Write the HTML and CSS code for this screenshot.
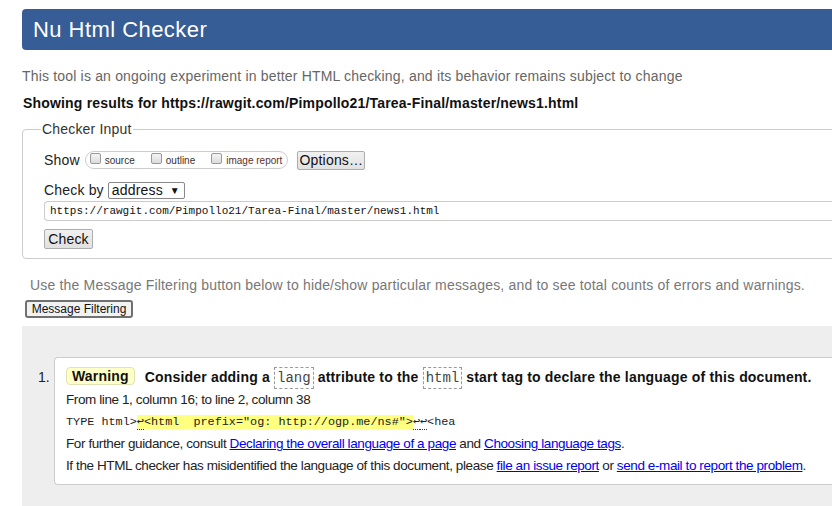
FILE: index.html
```html
<!DOCTYPE html>
<html lang="en">
<head>
<meta charset="utf-8">
<title>Nu Html Checker</title>
<link rel="stylesheet" href="styles.css">
</head>
<body>
<div class="page">
  <h1 class="banner">Nu Html Checker</h1>
  <p class="intro">This tool is an ongoing experiment in better HTML checking, and its behavior remains subject to change</p>
  <p class="showing">Showing results for https://rawgit.com/Pimpollo21/Tarea-Final/master/news1.html</p>
  <fieldset class="input">
    <legend>Checker Input</legend>
    <div class="row show-row">
      <span class="label">Show</span>
      <span class="opts">
        <span class="opt"><span class="cb"></span>source</span>
        <span class="opt"><span class="cb"></span>outline</span>
        <span class="opt img"><span class="cb"></span>image report</span>
      </span>
      <span class="btn options">Options…</span>
    </div>
    <div class="row by-row">
      <span class="label">Check by</span>
      <span class="select">address<span class="arrow">▼</span></span>
    </div>
    <div class="url">https://rawgit.com/Pimpollo21/Tarea-Final/master/news1.html</div>
    <span class="btn check">Check</span>
  </fieldset>
  <p class="filter-note">Use the Message Filtering button below to hide/show particular messages, and to see total counts of errors and warnings.</p>
  <span class="filter-btn">Message Filtering</span>
  <div class="results">
    <ol class="messages">
      <li class="msg">
        <p class="title"><span class="badge">Warning</span><span class="text">Consider adding a <code>lang</code> attribute to the <code>html</code> start tag to declare the language of this document.</span></p>
        <p class="loc">From line 1, column 16; to line 2, column 38</p>
        <p class="extract">TYPE html&gt;<mark><span class="lf">↩</span>&lt;html  prefix="og: http://ogp.me/ns#"&gt;</mark><span class="lf">↩</span><span class="lf">↩</span>&lt;hea</p>
        <p class="info">For further guidance, consult <a href="#">Declaring the overall language of a page</a> and <a href="#">Choosing language tags</a>.</p>
        <p class="info">If the HTML checker has misidentified the language of this document, please <a href="#">file an issue report</a> or <a href="#">send e-mail to report the problem</a>.</p>
      </li>
    </ol>
  </div>
</div>
</body>
</html>
```

FILE: styles.css
```css
html, body {
  margin: 0;
  padding: 0;
  overflow: hidden;
  background: #fff;
}
body {
  font-family: "Liberation Sans", Arial, sans-serif;
  font-size: 14px;
  letter-spacing: 0.18px;
  color: #222;
}
.page {
  width: 880px;
  padding: 9px 0 40px 22px;
}
.banner {
  margin: 0;
  height: 41px;
  line-height: 41px;
  padding-left: 11px;
  background: #365d95;
  color: #fff;
  font-size: 22px;
  letter-spacing: 0.45px;
  font-weight: normal;
  border-radius: 4px;
}
.intro {
  margin: 17px 0 0;
  line-height: 18px;
  color: #666;
}
.showing {
  margin: 9px 0 0 1px;
  line-height: 18px;
  font-weight: bold;
  color: #111;
}
.input {
  margin: 9px 0 0;
  padding: 13px 0 9px 21px;
  border: 1px solid #ccc;
  border-radius: 4px;
  min-width: 0;
}
.input legend {
  margin-left: -3px;
  padding: 0 1px;
  line-height: 16px;
  color: #333;
}
.row {
  display: flex;
  align-items: center;
  height: 20px;
}
.label {
  color: #222;
}
.opts {
  display: flex;
  align-items: center;
  height: 16px;
  margin-left: 5px;
  padding: 0 5px 0 4px;
  border: 1px solid #ccc;
  border-radius: 9px;
  font-size: 10px;
  letter-spacing: 0;
  color: #333;
}
.opt {
  display: flex;
  align-items: center;
  margin-right: 16px;
}
.opt.img {
  margin-right: 0;
  color: #5a3030;
}
.cb {
  width: 9px;
  height: 9px;
  border: 1px solid #999;
  border-radius: 2px;
  background: linear-gradient(#f4f4f4, #dcdcdc);
  margin-right: 4px;
  margin-top: -3px;
}
.btn {
  display: inline-flex;
  align-items: center;
  justify-content: center;
  box-sizing: border-box;
  border: 1px solid #adadad;
  border-radius: 2px;
  background: linear-gradient(#f0f0f0, #e1e1e1);
  color: #111;
}
.options {
  margin-left: 9px;
  width: 68px;
  height: 19px;
}
.by-row {
  margin-top: 10px;
}
.select {
  display: inline-flex;
  align-items: center;
  box-sizing: border-box;
  margin-left: 4px;
  width: 77px;
  height: 17px;
  padding-left: 3px;
  border: 1px solid #888;
  border-radius: 2px;
  font-size: 14px;
  color: #111;
}
.arrow {
  margin-left: auto;
  margin-right: 4px;
  font-size: 10px;
}
.url {
  margin-top: 1px;
  box-sizing: border-box;
  height: 20px;
  line-height: 18px;
  padding-left: 5px;
  border: 1px solid #ccc;
  border-radius: 4px 0 0 4px;
  border-right: none;
  font-family: "Liberation Mono", "Courier New", monospace;
  font-size: 11px;
  letter-spacing: 0;
  color: #111;
}
.check {
  margin-top: 8px;
  width: 49px;
  height: 20px;
}
.filter-note {
  margin: 17px 0 0 8px;
  line-height: 18px;
  color: #777;
}
.filter-btn {
  display: inline-flex;
  align-items: center;
  justify-content: center;
  box-sizing: border-box;
  margin: 6px 0 0 3px;
  width: 108px;
  height: 18px;
  border: 2px solid #707070;
  border-radius: 3px;
  background: #f2f2f2;
  font-size: 12px;
  letter-spacing: 0;
  color: #111;
}
.results {
  margin-top: 8px;
  background: #eee;
  padding: 31px 0 60px 32px;
}
.messages {
  margin: 0;
  padding: 0;
  list-style: decimal outside;
}
.msg {
  background: #fff;
  border: 1px solid #ccc;
  border-right: none;
  border-radius: 4px 0 0 4px;
  padding: 8px 0 7px 11px;
  color: #111;
}
.msg::marker {
  color: #222;
}
.msg p {
  margin: 0;
  line-height: 22px;
}
.title {
  font-weight: bold;
}
.badge {
  display: inline-block;
  box-sizing: border-box;
  height: 18px;
  line-height: 16px;
  padding: 0 5px;
  margin-right: 10px;
  background: #ffffc8;
  border: 1px solid #e2e2b8;
  border-radius: 4px;
  vertical-align: 1px;
}
.title code {
  display: inline-block;
  box-sizing: border-box;
  height: 22px;
  line-height: 20px;
  padding: 0 2px;
  border: 1px dashed #999;
  font-family: "Liberation Mono", "Courier New", monospace;
  font-size: 14px;
  font-weight: normal;
  letter-spacing: 0;
  color: #444;
  vertical-align: middle;
}
.loc, .info {
  font-size: 13.5px;
  letter-spacing: -0.4px;
  color: #222;
}
.extract {
  font-family: "Liberation Mono", "DejaVu Sans Mono", monospace;
  font-size: 11.8px;
  letter-spacing: 0;
  white-space: pre;
  color: #222;
}
.extract mark {
  background: #ffff80;
  color: #222;
}
.lf {
  display: inline-block;
  width: 7.1px;
  line-height: 15px;
  font-family: "DejaVu Sans Mono", monospace;
  font-size: 12px;
  border-bottom: 1px dotted #333;
}
.info a {
  color: #00e;
}
```
